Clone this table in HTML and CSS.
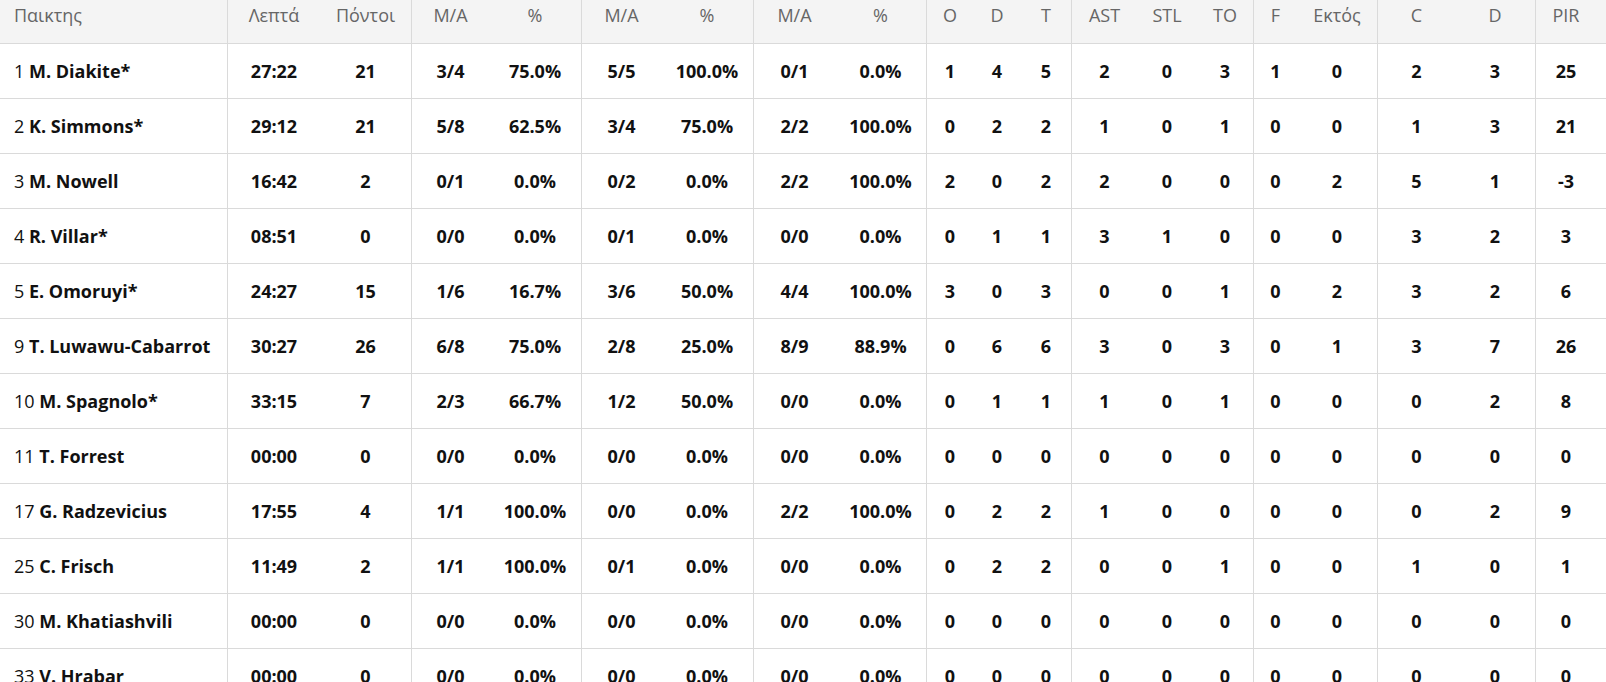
FILE: index.html
```html
<!DOCTYPE html>
<html lang="el">
<head>
<meta charset="utf-8">
<title>Box score</title>
<link rel="stylesheet" href="styles.css">
</head>
<body>
<div class="wrap">
<table class="stats">
<colgroup>
<col class="w-player"><col class="w-92"><col class="w-92">
<col class="w-77"><col class="w-93"><col class="w-79"><col class="w-93"><col class="w-81"><col class="w-92">
<col class="w-46"><col class="w-48"><col class="w-51">
<col class="w-65"><col class="w-60"><col class="w-57">
<col class="w-43"><col class="w-81">
<col class="w-77"><col class="w-81">
<col class="w-pir">
</colgroup>
<thead>
<tr>
<th class="player g">Παικτης</th><th>Λεπτά</th><th class="g">Πόντοι</th>
<th>M/A</th><th class="g">%</th><th>M/A</th><th class="g">%</th><th>M/A</th><th class="g">%</th>
<th>O</th><th>D</th><th class="g">T</th>
<th>AST</th><th>STL</th><th class="g">TO</th>
<th>F</th><th class="g">Εκτός</th>
<th>C</th><th class="g">D</th>
<th class="pir">PIR</th>
</tr>
</thead>
<tbody id="rows"></tbody>
</table>
</div>
<script src="app.js"></script>
</body>
</html>
```
FILE: app.js
```js
const data = [
["1","M. Diakite*","27:22","21","3/4","75.0%","5/5","100.0%","0/1","0.0%","1","4","5","2","0","3","1","0","2","3","25"],
["2","K. Simmons*","29:12","21","5/8","62.5%","3/4","75.0%","2/2","100.0%","0","2","2","1","0","1","0","0","1","3","21"],
["3","M. Nowell","16:42","2","0/1","0.0%","0/2","0.0%","2/2","100.0%","2","0","2","2","0","0","0","2","5","1","-3"],
["4","R. Villar*","08:51","0","0/0","0.0%","0/1","0.0%","0/0","0.0%","0","1","1","3","1","0","0","0","3","2","3"],
["5","E. Omoruyi*","24:27","15","1/6","16.7%","3/6","50.0%","4/4","100.0%","3","0","3","0","0","1","0","2","3","2","6"],
["9","T. Luwawu-Cabarrot","30:27","26","6/8","75.0%","2/8","25.0%","8/9","88.9%","0","6","6","3","0","3","0","1","3","7","26"],
["10","M. Spagnolo*","33:15","7","2/3","66.7%","1/2","50.0%","0/0","0.0%","0","1","1","1","0","1","0","0","0","2","8"],
["11","T. Forrest","00:00","0","0/0","0.0%","0/0","0.0%","0/0","0.0%","0","0","0","0","0","0","0","0","0","0","0"],
["17","G. Radzevicius","17:55","4","1/1","100.0%","0/0","0.0%","2/2","100.0%","0","2","2","1","0","0","0","0","0","2","9"],
["25","C. Frisch","11:49","2","1/1","100.0%","0/1","0.0%","0/0","0.0%","0","2","2","0","0","1","0","0","1","0","1"],
["30","M. Khatiashvili","00:00","0","0/0","0.0%","0/0","0.0%","0/0","0.0%","0","0","0","0","0","0","0","0","0","0","0"],
["33","V. Hrabar","00:00","0","0/0","0.0%","0/0","0.0%","0/0","0.0%","0","0","0","0","0","0","0","0","0","0","0"]
];
const groupEnds = new Set([3, 5, 7, 9, 12, 15, 17, 19]);
const tbody = document.getElementById("rows");
for (const r of data) {
  const tr = document.createElement("tr");
  const p = document.createElement("td");
  p.className = "player g";
  const num = document.createElement("span");
  num.className = "num";
  num.textContent = r[0] + " ";
  const nm = document.createElement("span");
  nm.className = "name";
  nm.textContent = r[1];
  p.append(num, nm);
  tr.append(p);
  for (let i = 2; i < r.length; i++) {
    const td = document.createElement("td");
    td.textContent = r[i];
    if (groupEnds.has(i)) td.className = "g";
    if (i === r.length - 1) td.className = "pir";
    tr.append(td);
  }
  tbody.append(tr);
}
```
FILE: styles.css
```css
html, body {
  margin: 0;
  padding: 0;
  background: #fff;
}
body {
  font-family: "Open Sans", "Noto Sans", sans-serif;
  color: #111;
  overflow: hidden;
}
.wrap {
  width: 1606px;
}
.stats {
  width: 1606px;
  table-layout: fixed;
  border-collapse: separate;
  border-spacing: 0;
  font-size: 18px;
}
.w-player { width: 228px; }
.w-92 { width: 92px; }
.w-93 { width: 93px; }
.w-77 { width: 77px; }
.w-79 { width: 79px; }
.w-81 { width: 81px; }
.w-46 { width: 46px; }
.w-48 { width: 48px; }
.w-51 { width: 51px; }
.w-65 { width: 65px; }
.w-60 { width: 60px; }
.w-57 { width: 57px; }
.w-43 { width: 43px; }
.w-pir { width: 70px; }

.stats th, .stats td {
  padding: 0;
  text-align: center;
  border-bottom: 1px solid #dadada;
  white-space: nowrap;
  overflow: hidden;
}
.stats th {
  height: 44px;
  box-sizing: border-box;
  background: #f4f4f4;
  color: #666;
  font-weight: 400;
  vertical-align: top;
  padding-top: 4px;
  line-height: 22px;
}
.stats td {
  height: 54px;
  font-weight: 700;
  vertical-align: middle;
  line-height: 22px;
}
.stats .g {
  border-right: 1px solid #dadada;
}
.stats .player {
  text-align: left;
  padding-left: 14px;
}
.stats .pir {
  padding-right: 10px;
}
.num {
  font-weight: 400;
}
.name {
  font-weight: 700;
}
```
